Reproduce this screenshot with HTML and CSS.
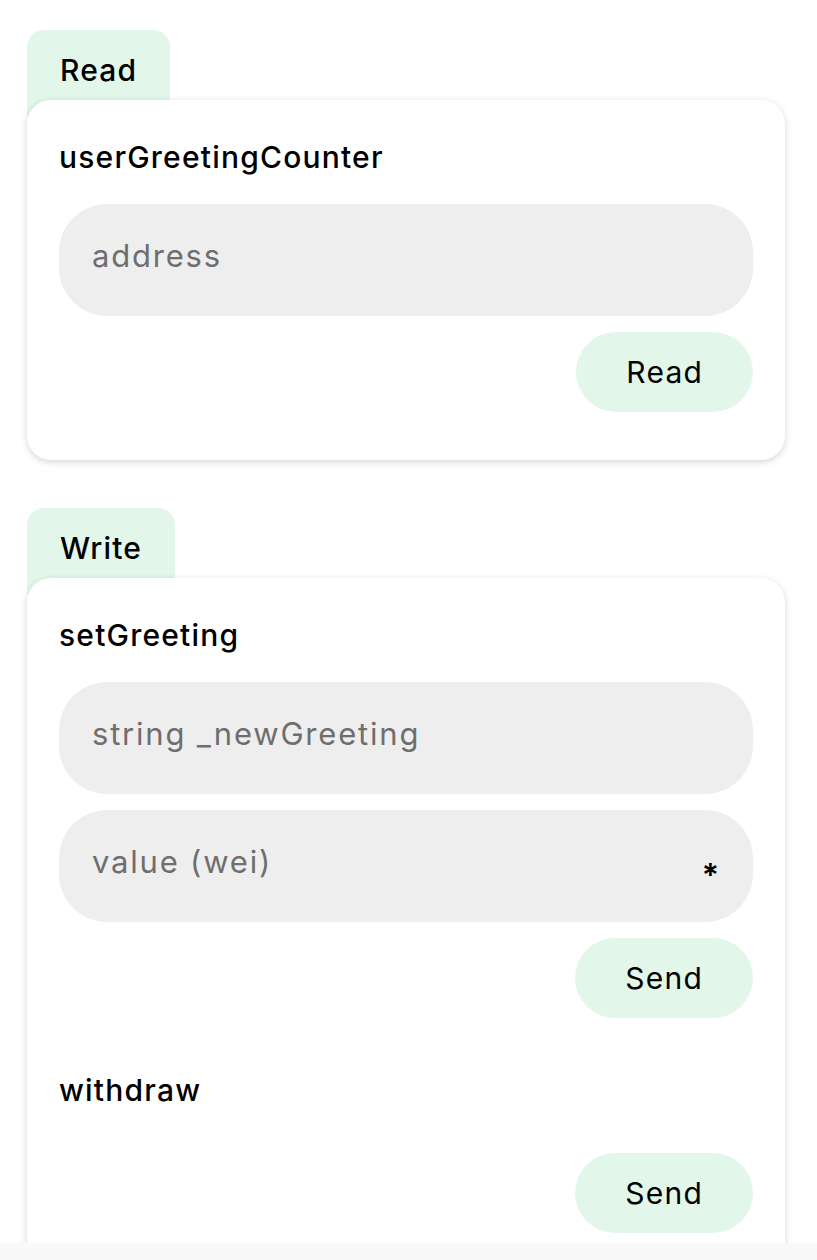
FILE: index.html
```html
<!DOCTYPE html>
<html lang="en">
<head>
<meta charset="utf-8">
<title>Contract</title>
<link rel="stylesheet" href="styles.css">
</head>
<body>
<div class="screen">
  <main class="content">
    <section class="group">
      <div class="tab">Read</div>
      <div class="card">
        <div class="fn">
          <div class="fn-name">userGreetingCounter</div>
          <div class="fields">
            <label class="field"><input class="field-input" type="text" placeholder="address"></label>
          </div>
          <div class="actions"><button class="btn" type="button">Read</button></div>
        </div>
      </div>
    </section>

    <section class="group">
      <div class="tab">Write</div>
      <div class="card">
        <div class="fn">
          <div class="fn-name">setGreeting</div>
          <div class="fields">
            <label class="field"><input class="field-input" type="text" placeholder="string _newGreeting"></label>
            <label class="field"><input class="field-input" type="text" placeholder="value (wei)"><span class="req">*</span></label>
          </div>
          <div class="actions"><button class="btn" type="button">Send</button></div>
        </div>
        <div class="fn">
          <div class="fn-name">withdraw</div>
          <div class="fields"></div>
          <div class="actions"><button class="btn" type="button">Send</button></div>
        </div>
      </div>
    </section>
  </main>
  <div class="bottom-bar"></div>
</div>
</body>
</html>
```

FILE: styles.css
```css
* { box-sizing: border-box; }

html, body {
  margin: 0;
  padding: 0;
  background: #ffffff;
}

body {
  font-family: "Inter", "Noto Sans", sans-serif;
  color: #000000;
}

.screen {
  width: 817px;
  height: 1260px;
  display: flex;
  flex-direction: column;
  overflow: hidden;
}

.content {
  flex: 1;
  min-height: 0;
  overflow: hidden;
  padding: 30px 32px 0 27px;
  display: flex;
  flex-direction: column;
  gap: 48px;
}

.bottom-bar {
  height: 17px;
  flex: none;
  background: #f9f9f9;
}

.group {
  display: flex;
  flex-direction: column;
  align-items: flex-start;
}

.tab {
  background: #e3f6ea;
  border-radius: 17px 17px 0 0;
  padding: 18px 33px 24px 33px;
  font-size: 30px;
  line-height: 44px;
  font-weight: 500;
  letter-spacing: 1.2px;
}

.card {
  position: relative;
  align-self: stretch;
  margin-top: -16px;
  background: #ffffff;
  border-radius: 24px;
  box-shadow: 0 2px 7px rgba(0, 0, 0, 0.17);
  padding: 35px 32px 48px 32px;
  display: flex;
  flex-direction: column;
  gap: 50px;
}

.fn {
  display: flex;
  flex-direction: column;
}

.fn-name {
  font-size: 30px;
  line-height: 44px;
  font-weight: 500;
  letter-spacing: 1.2px;
  margin-bottom: 25px;
}

.fields {
  display: flex;
  flex-direction: column;
  gap: 16px;
}

.field {
  display: flex;
  align-items: center;
  height: 112px;
  border-radius: 48px;
  background: #eeeeee;
  padding: 0 34px 10px 33px;
}

.field-input {
  flex: 1;
  min-width: 0;
  border: 0;
  outline: none;
  background: transparent;
  font-family: inherit;
  font-size: 31px;
  letter-spacing: 1.8px;
  color: #000;
  padding: 0;
}

.field-input::placeholder {
  color: #6e6e6e;
  opacity: 1;
}

.req {
  font-size: 32px;
  font-weight: 600;
  margin-top: 28px;
}

.actions {
  display: flex;
  justify-content: flex-end;
  margin-top: 16px;
}

.btn {
  height: 80px;
  border: 0;
  border-radius: 40px;
  background: #e3f6ea;
  padding: 0 50px;
  font-family: inherit;
  font-size: 30px;
  letter-spacing: 1.2px;
  color: #000;
}
```
